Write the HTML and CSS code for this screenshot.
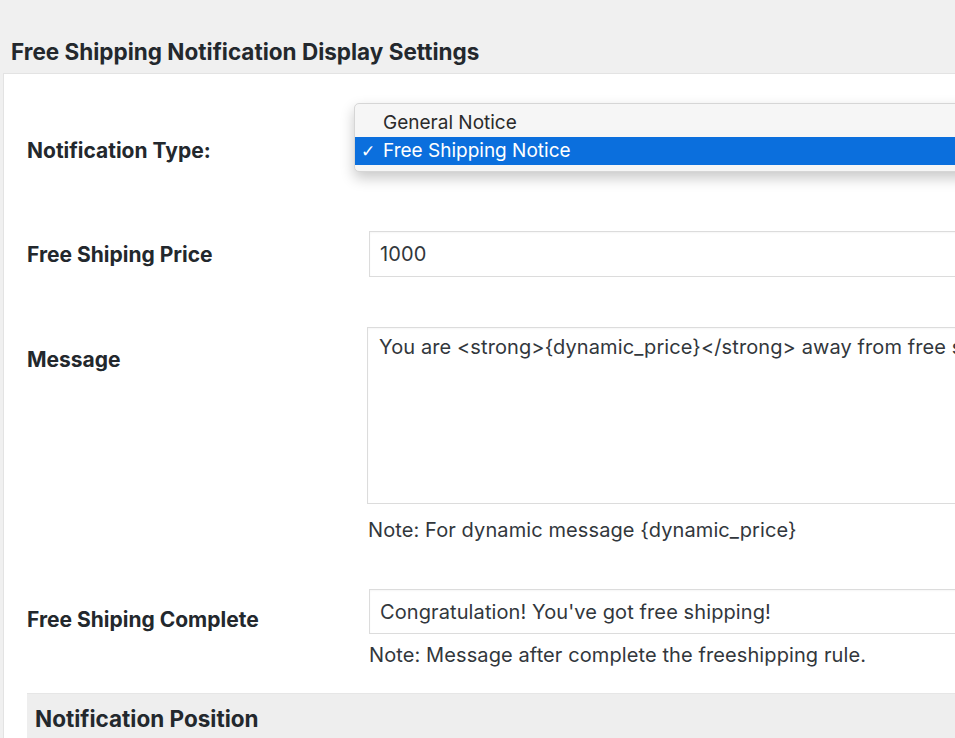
FILE: index.html
```html
<!DOCTYPE html>
<html lang="en">
<head>
<meta charset="utf-8">
<title>Free Shipping Notification Display Settings</title>
<link rel="stylesheet" href="styles.css">
</head>
<body>
<h2 class="page-title">Free Shipping Notification Display Settings</h2>
<div class="panel">
  <div class="row row-type">
    <div class="label">Notification Type:</div>
    <div class="field">
      <ul class="select-menu">
        <li class="opt">General Notice</li>
        <li class="opt opt-selected"><span class="check">✓</span>Free Shipping Notice</li>
      </ul>
    </div>
  </div>
  <div class="row row-price">
    <div class="label">Free Shiping Price</div>
    <div class="field">
      <div class="input">1000</div>
    </div>
  </div>
  <div class="row row-message">
    <div class="label">Message</div>
    <div class="field">
      <div class="textarea">You are &lt;strong&gt;{dynamic_price}&lt;/strong&gt; away from free shipping!</div>
      <p class="note note-message">Note: For dynamic message {dynamic_price}</p>
    </div>
  </div>
  <div class="row row-complete">
    <div class="label">Free Shiping Complete</div>
    <div class="field">
      <div class="input">Congratulation! You've got free shipping!</div>
      <p class="note note-complete">Note: Message after complete the freeshipping rule.</p>
    </div>
  </div>
  <div class="section-head">Notification Position</div>
</div>
</body>
</html>
```

FILE: styles.css
```css
html, body {
  margin: 0;
  padding: 0;
  height: 100%;
  overflow: hidden;
}
body {
  background: #f0f0f0;
  font-family: Inter, "Liberation Sans", Arial, sans-serif;
  color: #23282d;
  width: 955px;
}
.page-title {
  margin: 0;
  padding: 39px 0 0 11px;
  height: 34px;
  font-size: 22.5px;
  line-height: 26px;
  font-weight: 700;
  color: #23282d;
  white-space: nowrap;
}
.panel {
  margin-left: 3px;
  width: 1100px;
  background: #fff;
  border-top: 1px solid #e3e3e3;
  border-left: 1px solid #e3e3e3;
  height: 700px;
}
.row {
  display: grid;
  grid-template-columns: 342px 1fr;
  padding-left: 23px;
}
.label {
  font-size: 21px;
  line-height: 24px;
  font-weight: 700;
  color: #23282d;
  white-space: nowrap;
}
.field {
  position: relative;
  font-size: 20px;
  line-height: 24px;
  letter-spacing: 0.1px;
  color: #32373c;
}
.row-type { height: 157px; }
.row-type .label { margin-top: 65px; }
.row-price { height: 96px; }
.row-price .label { margin-top: 12px; }
.row-message { height: 262px; }
.row-message .label { margin-top: 21px; }
.row-complete { height: 104px; }
.row-complete .label { margin-top: 19px; }

.select-menu {
  position: absolute;
  top: 29px;
  left: -15px;
  width: 720px;
  margin: 0;
  padding: 5px 0 6px;
  list-style: none;
  background: #f6f6f6;
  border: 1px solid #d6d6d6;
  border-radius: 5px;
  box-shadow: 0 6px 14px rgba(0,0,0,0.22);
  letter-spacing: 0;
}
.opt {
  height: 28px;
  line-height: 28px;
  padding-left: 28px;
  font-size: 19px;
  color: #2b2b2b;
  white-space: nowrap;
}
.opt-selected {
  position: relative;
  background: #0b6fdd;
  color: #fff;
}
.check {
  position: absolute;
  left: 6px;
  top: 0;
  font-family: "DejaVu Sans", sans-serif;
  font-size: 17px;
}
.input {
  box-sizing: border-box;
  width: 700px;
  height: 46px;
  border: 1px solid #dcdcdc;
  background: #fff;
  padding: 10px 10px;
  white-space: nowrap;
  box-shadow: inset 0 1px 2px rgba(0,0,0,0.04);
}
.row-message .field { margin-left: -2px; }
.textarea {
  box-sizing: border-box;
  width: 700px;
  height: 177px;
  border: 1px solid #dcdcdc;
  background: #fff;
  padding: 7px 11px;
  white-space: nowrap;
  overflow: hidden;
  box-shadow: inset 0 1px 2px rgba(0,0,0,0.04);
}
.row-complete .input { height: 45px; }
.note {
  margin: 0;
  white-space: nowrap;
  color: #32373c;
}
.note-message { margin-top: 14px; margin-left: 1px; }
.note-complete { margin-top: 9px; }
.section-head {
  margin-left: 23px;
  background: #eeeeee;
  border-top: 1px solid #e6e6e6;
  height: 60px;
  padding: 12px 0 0 8px;
  font-size: 22.5px;
  line-height: 26px;
  font-weight: 700;
  color: #23282d;
}
```
